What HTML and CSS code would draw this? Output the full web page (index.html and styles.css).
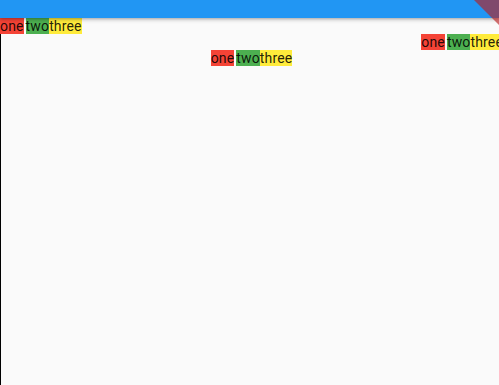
FILE: index.html
```html
<!DOCTYPE html>
<html>
<head>
<meta charset="utf-8">
<link rel="stylesheet" href="styles.css">
</head>
<body>
<div class="app">
  <header class="appbar"></header>
  <div class="banner"></div>
  <main class="content">
    <div class="row row-start"><span class="w one">one</span><span class="w two">two</span><span class="w three">three</span></div>
    <div class="row row-end"><span class="w one">one</span><span class="w two">two</span><span class="w three">three</span></div>
    <div class="row row-center"><span class="w one">one</span><span class="w two">two</span><span class="w three">three</span></div>
  </main>
</div>
</body>
</html>
```

FILE: styles.css
```css
html, body {
  margin: 0;
  padding: 0;
  width: 499px;
  height: 385px;
  overflow: hidden;
  background: #fafafa;
}
.app {
  position: relative;
  width: 499px;
  height: 385px;
  display: flex;
  flex-direction: column;
  font-family: Roboto, "Noto Sans", sans-serif;
  font-size: 14px;
  letter-spacing: 0.15px;
  color: rgba(0, 0, 0, 0.87);
}
.appbar {
  height: 18px;
  flex: none;
  background: #2196f3;
  box-shadow: 0 2px 4px rgba(0, 0, 0, 0.2), 0 1px 2px rgba(0, 0, 0, 0.14);
  position: relative;
  z-index: 2;
}
.banner {
  position: absolute;
  top: 0;
  right: 0;
  width: 25px;
  height: 25px;
  background: rgba(183, 28, 28, 0.63);
  clip-path: polygon(0 0, 100% 0, 100% 100%);
  z-index: 3;
}
.content {
  flex: 1;
  display: flex;
  flex-direction: column;
  border-left: 1px solid #000;
}
.row {
  display: flex;
  height: 16px;
  line-height: 16px;
  white-space: nowrap;
}
.row-start {
  align-self: flex-start;
  margin-left: -1px;
}
.row-end {
  align-self: flex-end;
  margin-right: -4px;
}
.row-center {
  align-self: center;
  margin-left: 3px;
}
.w {
  display: block;
}
.one {
  background: #f44336;
  margin-right: 2px;
}
.two {
  background: #4caf50;
}
.three {
  background: #ffeb3b;
}
```
